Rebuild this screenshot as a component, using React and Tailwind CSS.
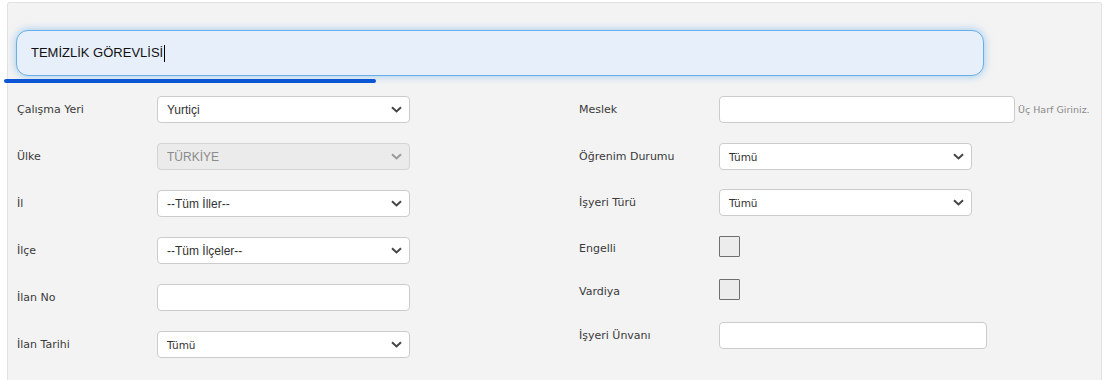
import React from "react";

const labelFont = { fontFamily: '"DejaVu Sans", Verdana, sans-serif' };
const arialFont = { fontFamily: '"Liberation Sans", Arial, sans-serif' };

function Chevron({ muted }) {
  return (
    <svg
      width="11"
      height="7"
      viewBox="0 0 11 7"
      className="shrink-0"
      fill="none"
      stroke={muted ? "#9a9a9a" : "#444"}
      strokeWidth="2"
    >
      <path d="M1 1.2 L5.5 5.4 L10 1.2" />
    </svg>
  );
}

function Select({ value, width = "w-[253px]", disabled, tahoma }) {
  return (
    <div
      className={`${width} h-[27px] flex items-center justify-between pl-[9px] pr-[7px] rounded-[4px] border ${
        disabled ? "bg-[#ebebeb] border-[#d4d4d4]" : "bg-white border-[#cccccc]"
      }`}
    >
      <span
        className={`${tahoma ? "text-[10.5px] translate-y-[1px]" : "text-[12px]"} ${
          disabled ? "text-[#8a8a8a]" : "text-[#333]"
        }`}
        style={tahoma ? labelFont : arialFont}
      >
        {value}
      </span>
      <Chevron muted={disabled} />
    </div>
  );
}

function TextBox({ width }) {
  return (
    <div className={`${width} h-[27px] bg-white rounded-[4px] border border-[#cccccc]`} />
  );
}

function CheckBox() {
  return (
    <div className="w-[21px] h-[21px] bg-[#ececec] border border-[#6f6f6f] rounded-[1px]" />
  );
}

function Row({ label, children, className = "", low }) {
  return (
    <div className={`flex items-center ${className}`}>
      <div
        className={`w-[140px] text-[11px] text-[#3a3a3a] ${
          low ? "translate-y-[3px]" : "translate-y-[1px]"
        }`}
        style={labelFont}
      >
        {label}
      </div>
      {children}
    </div>
  );
}

export default function App() {
  return (
    <div className="w-[1105px] h-[380px] bg-white overflow-hidden">
      <div className="ml-[7px] mt-[2px] w-[1095px] h-[378px] bg-[#f3f3f3] border-t border-l border-r border-[#e2e2e2] rounded-t-[3px]">
        <div className="pt-[27px] pl-[8px]">
          <div className="w-[968px] h-[46px] rounded-[12px] bg-[#e7effb] border border-[#66afe9] shadow-[0_0_8px_rgba(102,175,233,0.65)] flex items-center pl-[14px]">
            <span className="text-[13px] text-[#111]" style={arialFont}>
              TEMİZLİK GÖREVLİSİ
            </span>
            <span className="w-px h-[17px] bg-black ml-[1px]" />
          </div>
        </div>
        <div className="mt-[3px] -ml-[4px] w-[372px] h-[4px] rounded-full bg-[#0c56d6]" />

        <div className="flex mt-[13px] pl-[9px]">
          <div className="w-[562px] flex flex-col gap-[20px]">
            <Row label="Çalışma Yeri">
              <Select value="Yurtiçi" />
            </Row>
            <Row label="Ülke">
              <Select value="TÜRKİYE" disabled />
            </Row>
            <Row label="İl">
              <Select value="--Tüm İller--" />
            </Row>
            <Row label="İlçe">
              <Select value="--Tüm İlçeler--" />
            </Row>
            <Row label="İlan No">
              <TextBox width="w-[253px]" />
            </Row>
            <Row label="İlan Tarihi">
              <Select value="Tümü" tahoma />
            </Row>
          </div>

          <div className="flex flex-col">
            <Row label="Meslek">
              <TextBox width="w-[296px]" />
              <span className="ml-[3px] translate-y-[1px] text-[9.5px] text-[#8a8a8a]" style={labelFont}>
                Üç Harf Giriniz.
              </span>
            </Row>
            <Row label="Öğrenim Durumu" className="mt-[20px]">
              <Select value="Tümü" tahoma />
            </Row>
            <Row label="İşyeri Türü" className="mt-[19px]">
              <Select value="Tümü" tahoma />
            </Row>
            <Row label="Engelli" className="mt-[20px]" low>
              <CheckBox />
            </Row>
            <Row label="Vardiya" className="mt-[22px]" low>
              <CheckBox />
            </Row>
            <Row label="İşyeri Ünvanı" className="mt-[22px]">
              <TextBox width="w-[268px]" />
            </Row>
          </div>
        </div>
      </div>
    </div>
  );
}
